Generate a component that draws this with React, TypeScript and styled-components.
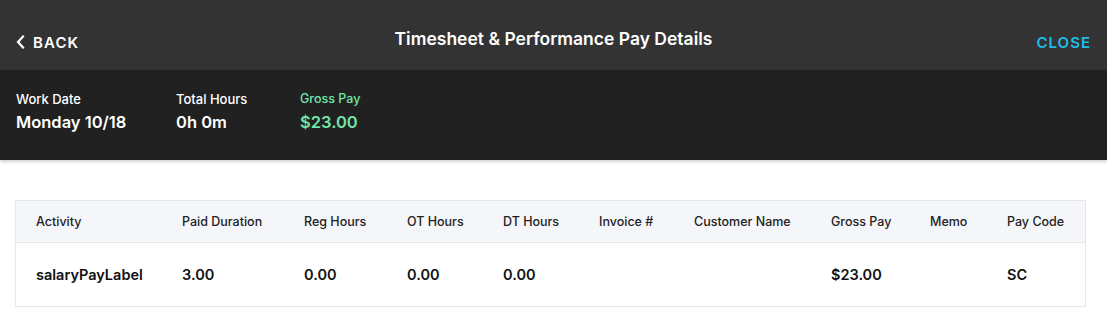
import React from "react";
import styled, { createGlobalStyle } from "styled-components";

const Global = createGlobalStyle`
  html, body { margin: 0; padding: 0; background: #ffffff; }
  body { font-family: Inter, "Open Sans", sans-serif; -webkit-font-smoothing: antialiased; }
`;

const Page = styled.div`
  width: 1107px;
  min-height: 326px;
  background: #ffffff;
`;

const TopBar = styled.header`
  height: 70px;
  background: #333333;
  display: grid;
  grid-template-columns: 1fr auto 1fr;
  align-items: center;
  padding: 0 16px 0 16px;
  box-sizing: border-box;
`;

const BackButton = styled.button`
  justify-self: start;
  display: flex;
  align-items: center;
  gap: 8px;
  background: none;
  border: none;
  padding: 0;
  margin-top: 14px;
  color: #ffffff;
  font-family: inherit;
  font-size: 15px;
  font-weight: 600;
  letter-spacing: 1.1px;
  cursor: pointer;
`;

const Title = styled.h1`
  margin: 6px 0 0 0;
  color: #ffffff;
  font-size: 17.5px;
  font-weight: 600;
`;

const CloseButton = styled.button`
  justify-self: end;
  background: none;
  border: none;
  padding: 0;
  margin-top: 14px;
  color: #1cbde6;
  font-family: inherit;
  font-size: 15px;
  font-weight: 600;
  letter-spacing: 1px;
  cursor: pointer;
`;

const Summary = styled.section`
  height: 90px;
  background: #212121;
  display: flex;
  align-items: flex-start;
  padding: 20px 0 0 16px;
  box-sizing: border-box;
  box-shadow: 0 2px 3px rgba(0, 0, 0, 0.18);
`;

const Stat = styled.div<{ $width: number }>`
  width: ${(p) => p.$width}px;
  display: flex;
  flex-direction: column;
  gap: 3px;
`;

const StatLabel = styled.span<{ $accent?: boolean }>`
  color: ${(p) => (p.$accent ? "#72e6a8" : "#ffffff")};
  font-size: ${(p) => (p.$accent ? "12.5px" : "13px")};
  font-weight: 500;
  line-height: 18px;
`;

const StatValue = styled.span<{ $accent?: boolean }>`
  color: ${(p) => (p.$accent ? "#72e6a8" : "#ffffff")};
  font-size: 16.5px;
  font-weight: 600;
  line-height: 22px;
`;

const Content = styled.main`
  padding: 40px 21px 0 15px;
`;

const Table = styled.div`
  border: 1px solid #e6e7ea;
`;

const cols = "146px 122px 103px 96px 96px 95px 137px 99px 77px 1fr";

const HeadRow = styled.div`
  display: grid;
  grid-template-columns: ${cols};
  align-items: center;
  height: 41px;
  padding-left: 20px;
  background: #f5f6f9;
  border-bottom: 1px solid #e6e7ea;
`;

const HeadCell = styled.div`
  color: #222222;
  font-size: 12.5px;
  font-weight: 500;
  white-space: nowrap;
`;

const BodyRow = styled.div`
  display: grid;
  grid-template-columns: ${cols};
  align-items: center;
  height: 63px;
  padding-left: 20px;
`;

const BodyCell = styled.div`
  color: #111111;
  font-size: 14.5px;
  font-weight: 600;
  white-space: nowrap;
`;

const headers = [
  "Activity",
  "Paid Duration",
  "Reg Hours",
  "OT Hours",
  "DT Hours",
  "Invoice #",
  "Customer Name",
  "Gross Pay",
  "Memo",
  "Pay Code",
];

const row = ["salaryPayLabel", "3.00", "0.00", "0.00", "0.00", "", "", "$23.00", "", "SC"];

const Chevron = () => (
  <svg width="9" height="14" viewBox="0 0 9 14" fill="none">
    <path d="M7 1.5L2 7l5 5.5" stroke="#ffffff" strokeWidth="2.2" strokeLinecap="square" />
  </svg>
);

export default function App() {
  return (
    <Page>
      <Global />
      <TopBar>
        <BackButton>
          <Chevron />
          BACK
        </BackButton>
        <Title>Timesheet &amp; Performance Pay Details</Title>
        <CloseButton>CLOSE</CloseButton>
      </TopBar>
      <Summary>
        <Stat $width={160}>
          <StatLabel>Work Date</StatLabel>
          <StatValue>Monday 10/18</StatValue>
        </Stat>
        <Stat $width={124}>
          <StatLabel>Total Hours</StatLabel>
          <StatValue>0h 0m</StatValue>
        </Stat>
        <Stat $width={120}>
          <StatLabel $accent>Gross Pay</StatLabel>
          <StatValue $accent>$23.00</StatValue>
        </Stat>
      </Summary>
      <Content>
        <Table>
          <HeadRow>
            {headers.map((h) => (
              <HeadCell key={h}>{h}</HeadCell>
            ))}
          </HeadRow>
          <BodyRow>
            {row.map((c, i) => (
              <BodyCell key={i}>{c}</BodyCell>
            ))}
          </BodyRow>
        </Table>
      </Content>
    </Page>
  );
}
